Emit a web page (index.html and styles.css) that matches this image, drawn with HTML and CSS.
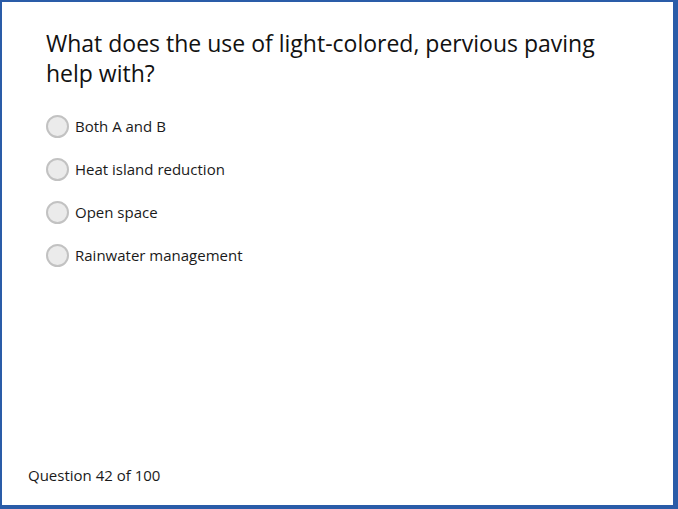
FILE: index.html
```html
<!DOCTYPE html>
<html>
<head>
<meta charset="utf-8">
<title>Question 42</title>
<link rel="stylesheet" href="styles.css">
</head>
<body>
<div class="frame">
  <div class="quiz">
    <h1 class="question">What does the use of light-colored, pervious paving help with?</h1>
    <ul class="options">
      <li><label><span class="radio"></span>Both A and B</label></li>
      <li><label><span class="radio"></span>Heat island reduction</label></li>
      <li><label><span class="radio"></span>Open space</label></li>
      <li><label><span class="radio"></span>Rainwater management</label></li>
    </ul>
  </div>
  <div class="footer">Question 42 of 100</div>
</div>
</body>
</html>
```

FILE: styles.css
```css
html, body{margin:0;padding:0;height:100%;}
body{font-family:"Open Sans","Noto Sans",sans-serif;color:#1a1a1a;background:#fff;}
.frame{box-sizing:border-box;height:509px;border-style:solid;border-color:#2a5ca8;border-width:2px 5px 4px 2px;display:flex;flex-direction:column;}
.quiz{flex:1;padding:26px 40px 0 44px;}
.question{font-size:23px;font-weight:normal;line-height:30px;margin:0;color:#111;width:600px;}
.options{list-style:none;margin:27px 0 0;padding:0;}
.options li{height:43px;}
.options label{display:flex;align-items:center;gap:6px;font-size:15px;height:22px;}
.radio{box-sizing:border-box;width:23px;height:23px;border-radius:50%;border:2.5px solid #c2c2c2;background:#ebebeb;flex:none;}
.footer{font-size:15px;padding:0 0 20px 26px;}
```
